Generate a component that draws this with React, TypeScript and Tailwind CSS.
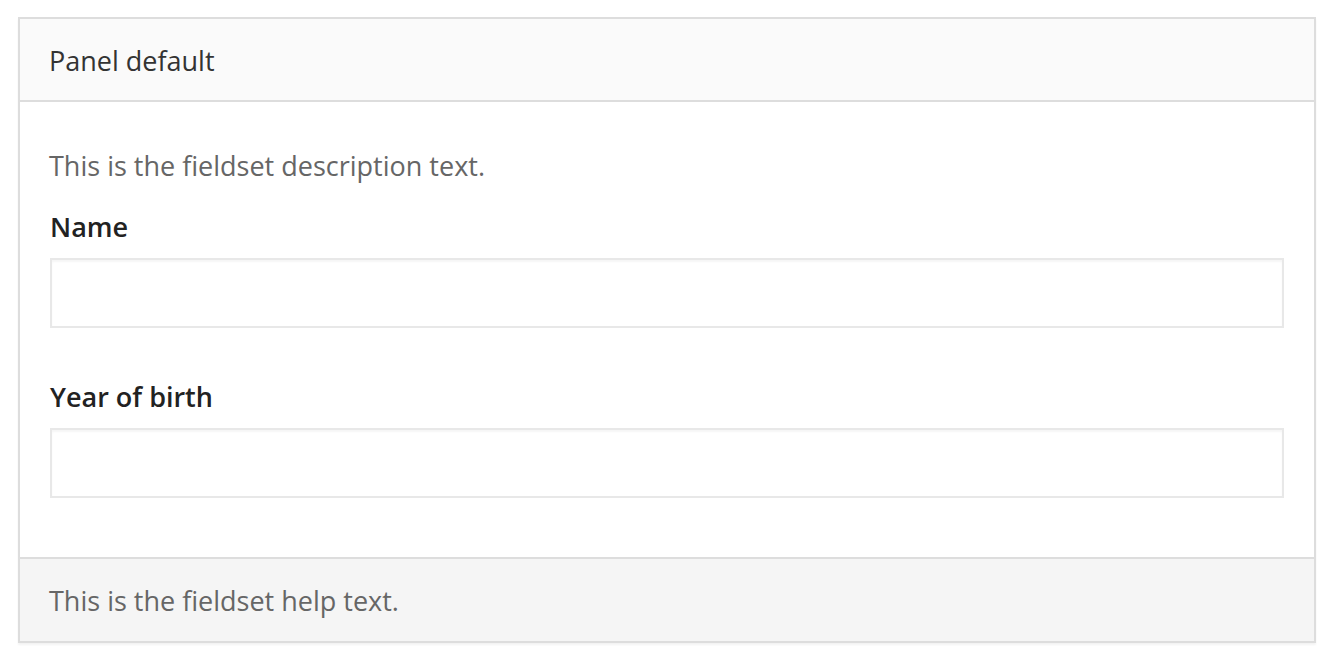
import React from "react";

function Field({ label, first }: { label: string; first?: boolean }) {
  return (
    <div className={first ? "" : "mt-[49px]"}>
      <label className="block text-[27px] leading-[40px] font-semibold text-[#222222]">{label}</label>
      <input
        type="text"
        className="mt-[11px] block w-full h-[70px] border-2 border-[#e8e8e8] bg-white shadow-[inset_0_2px_2px_rgba(0,0,0,0.04)] outline-none"
      />
    </div>
  );
}

export default function App() {
  return (
    <div className="min-h-screen bg-white pt-[17px] pl-[18px]" style={{ fontFamily: '"Open Sans", "Noto Sans", sans-serif' }}>
      <div className="w-[1298px] border-2 border-[#dddddd] shadow-[0_2px_2px_rgba(0,0,0,0.05)]">
        <div className="h-[83px] flex items-center px-[29px] pt-[2px] bg-[#fafafa] border-b-2 border-[#dddddd]">
          <h3 className="text-[27px] leading-[40px] text-[#333333]">Panel default</h3>
        </div>
        <div className="px-[30px] pt-[44px] pb-[59px] bg-white">
          <p className="text-[27px] leading-[40px] text-[#666666] -ml-px">This is the fieldset description text.</p>
          <div className="mt-[21px]">
            <Field label="Name" first />
            <Field label="Year of birth" />
          </div>
        </div>
        <div className="h-[84px] flex items-center px-[29px] pt-px bg-[#f5f5f5] border-t-2 border-[#dddddd]">
          <p className="text-[27px] leading-[40px] text-[#666666]">This is the fieldset help text.</p>
        </div>
      </div>
    </div>
  );
}
